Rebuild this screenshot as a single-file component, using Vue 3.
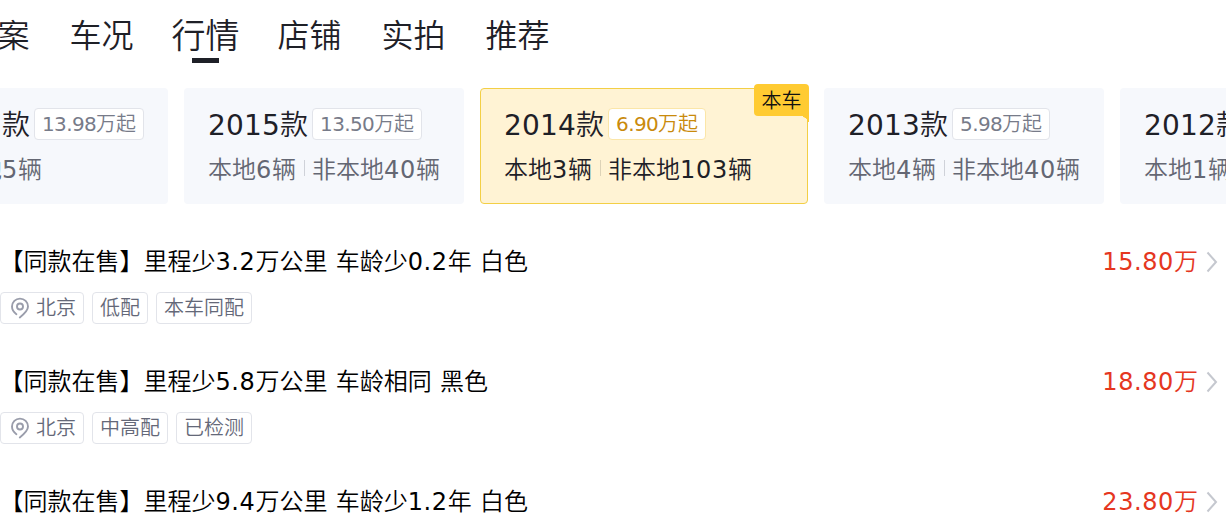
<script setup>
import { ref } from 'vue'

const tabs = ['方案', '车况', '行情', '店铺', '实拍', '推荐']
const activeTab = ref('行情')

const years = [
  { year: '2017', price: '13.98', other: 5 },
  { year: '2015', price: '13.50', local: 6, other: 40 },
  { year: '2014', price: '6.90', local: 3, other: 103, current: true },
  { year: '2013', price: '5.98', local: 4, other: 40 },
  { year: '2012', price: '4.98', local: 1, other: 20 }
]

const cars = [
  { title: '【同款在售】里程少3.2万公里 车龄少0.2年 白色', price: '15.80', city: '北京', tags: ['低配', '本车同配'] },
  { title: '【同款在售】里程少5.8万公里 车龄相同 黑色', price: '18.80', city: '北京', tags: ['中高配', '已检测'] },
  { title: '【同款在售】里程少9.4万公里 车龄少1.2年 白色', price: '23.80', city: '北京', tags: ['低配'] }
]

// отделяем цифры и пробелы от иероглифов
const split = (text) => text.split(/([\d.]+|\s)/).filter(Boolean)
const isNum = (part) => /^[\d.\s]+$/.test(part)
</script>

<template>
  <div class="page">
    <nav class="tabs">
      <div
        v-for="tab in tabs"
        :key="tab"
        class="tab"
        :class="{ active: tab === activeTab }"
        @click="activeTab = tab"
      >{{ tab }}</div>
    </nav>

    <div class="years">
      <div
        v-for="item in years"
        :key="item.year"
        class="year-card"
        :class="{ current: item.current }"
      >
        <div class="year-head">
          <span class="year-name"><span class="num-lg">{{ item.year }}</span>款</span>
          <span class="year-price"><span class="num-sm">{{ item.price }}</span>万起</span>
        </div>
        <div class="year-count">
          <template v-if="item.local">
            <span>本地<span class="num">{{ item.local }}</span>辆</span>
            <i class="line"></i>
          </template>
          <span>非本地<span class="num">{{ item.other }}</span>辆</span>
        </div>
        <div v-if="item.current" class="corner">本车</div>
      </div>
    </div>

    <div class="list">
      <div v-for="car in cars" :key="car.title" class="car">
        <div class="car-top">
          <div class="car-title"><span
            v-for="(part, i) in split(car.title)"
            :key="i"
            :class="{ num: isNum(part) }"
          >{{ part }}</span></div>
          <div class="car-price"><span class="num">{{ car.price }}</span>万</div>
          <svg class="arrow" width="12" height="22" viewBox="0 0 12 22">
            <path d="M1.5 1.5L10 11L1.5 20.5" fill="none" stroke="#c5c8cf" stroke-width="2" />
          </svg>
        </div>
        <div class="tags">
          <span class="tag">
            <svg class="pin" width="20" height="22" viewBox="0 0 20 22">
              <path d="M6.4 17.2C3.8 15.4 2 13 2 9.6a8 8 0 1 1 16 0c0 4-4 7.6-8.2 10.8" fill="none" stroke="#9a9dab" stroke-width="1.9" stroke-linecap="round" />
              <circle cx="10" cy="9.5" r="3" fill="none" stroke="#9a9dab" stroke-width="1.9" />
            </svg>{{ car.city }}
          </span>
          <span v-for="tag in car.tags" :key="tag" class="tag">{{ tag }}</span>
        </div>
      </div>
    </div>
  </div>
</template>

<style>
body {
  overflow: hidden;
}
</style>

<style scoped>
.page {
  width: 100%;
  height: 518px;
  overflow: hidden;
  background: #fff;
  color: #000;
  font-family: 'DejaVu Sans', 'Noto Sans CJK SC', sans-serif;
  font-weight: 350;
  white-space: nowrap;
}

/* вкладки */
.tabs {
  display: flex;
  gap: 40px;
  height: 88px;
  margin-left: -34.5px;
}
.tab {
  flex: none;
  height: 72px;
  font-size: 32px;
  line-height: 72px;
  color: #1e2027;
}
.tab.active {
  position: relative;
  margin: 0 -2px;
  font-size: 34px;
}
.tab.active::after {
  content: '';
  position: absolute;
  left: 20.5px;
  top: 58px;
  width: 27px;
  height: 5px;
  background: #1e2027;
}

/* карточки по годам */
.years {
  display: flex;
  gap: 16px;
  margin-left: -94px;
}
.year-card {
  position: relative;
  flex: none;
  box-sizing: border-box;
  height: 116px;
  padding: 20px 24px 0;
  border-radius: 4px;
  background: #f6f8fc;
}
.year-head {
  display: flex;
  gap: 4px;
  height: 32px;
}
.year-name {
  font-size: 28px;
  line-height: 35px;
  color: #1e2027;
}
.year-price {
  box-sizing: border-box;
  height: 32px;
  padding: 0 7px;
  border: 1px solid #e2e4ea;
  border-radius: 4px;
  background: #fff;
  font-size: 20px;
  line-height: 30px;
  color: #777b89;
}
.year-count {
  display: flex;
  align-items: center;
  height: 32px;
  margin-top: 14px;
  font-size: 24px;
  line-height: 32px;
  color: #646773;
}
.year-count .num {
  letter-spacing: 0.73px;
}
.line {
  width: 1px;
  height: 16px;
  margin: -4px 7px 0 8px;
  background: #cfd2d9;
}
.current {
  width: 328px;
  padding: 19px 23px 0;
  border: 1px solid #f3cf45;
  background: #fff3d4;
}
.current .year-price {
  border-color: #fbe6a8;
  color: #c98a0c;
}
.current .year-count {
  color: #1e2027;
}
.current .line {
  background: #ddd3b8;
}
.corner {
  position: absolute;
  top: -5px;
  right: -2px;
  width: 55px;
  height: 32px;
  border-radius: 4px 4px 0 4px;
  background: #ffcb32;
  font-size: 20px;
  line-height: 35px;
  text-align: center;
  color: #111;
}
.corner::after {
  content: '';
  position: absolute;
  right: 0;
  top: 32px;
  width: 6px;
  height: 6px;
  background: radial-gradient(circle at 0 100%, transparent 4.5px, #ffcb32 5px);
}

/* список машин */
.list {
  padding-top: 40px;
}
.car {
  height: 120px;
}
.car-top {
  display: flex;
  align-items: center;
  height: 36px;
  padding-right: 8px;
  font-size: 24px;
  line-height: 36px;
}
.car-title {
  flex: 1;
  margin-left: -0.5px;
}
.car-price {
  color: #e5371f;
}
.arrow {
  margin-left: 8px;
}
.tags {
  display: flex;
  gap: 8px;
  margin-top: 12px;
}
.tag {
  display: flex;
  align-items: center;
  box-sizing: border-box;
  height: 32px;
  padding: 0 7px;
  border: 1px solid #e2e4ea;
  border-radius: 4px;
  font-size: 20px;
  line-height: 30px;
  color: #646878;
}
.pin {
  margin: -1px 6px 0 2px;
}

/* ширина цифр */
.num,
.num-lg,
.num-sm {
  font-weight: 400;
}
.num {
  letter-spacing: 0.6px;
}
.num-lg {
  letter-spacing: 0.19px;
}
.num-sm {
  letter-spacing: -0.65px;
}
</style>
